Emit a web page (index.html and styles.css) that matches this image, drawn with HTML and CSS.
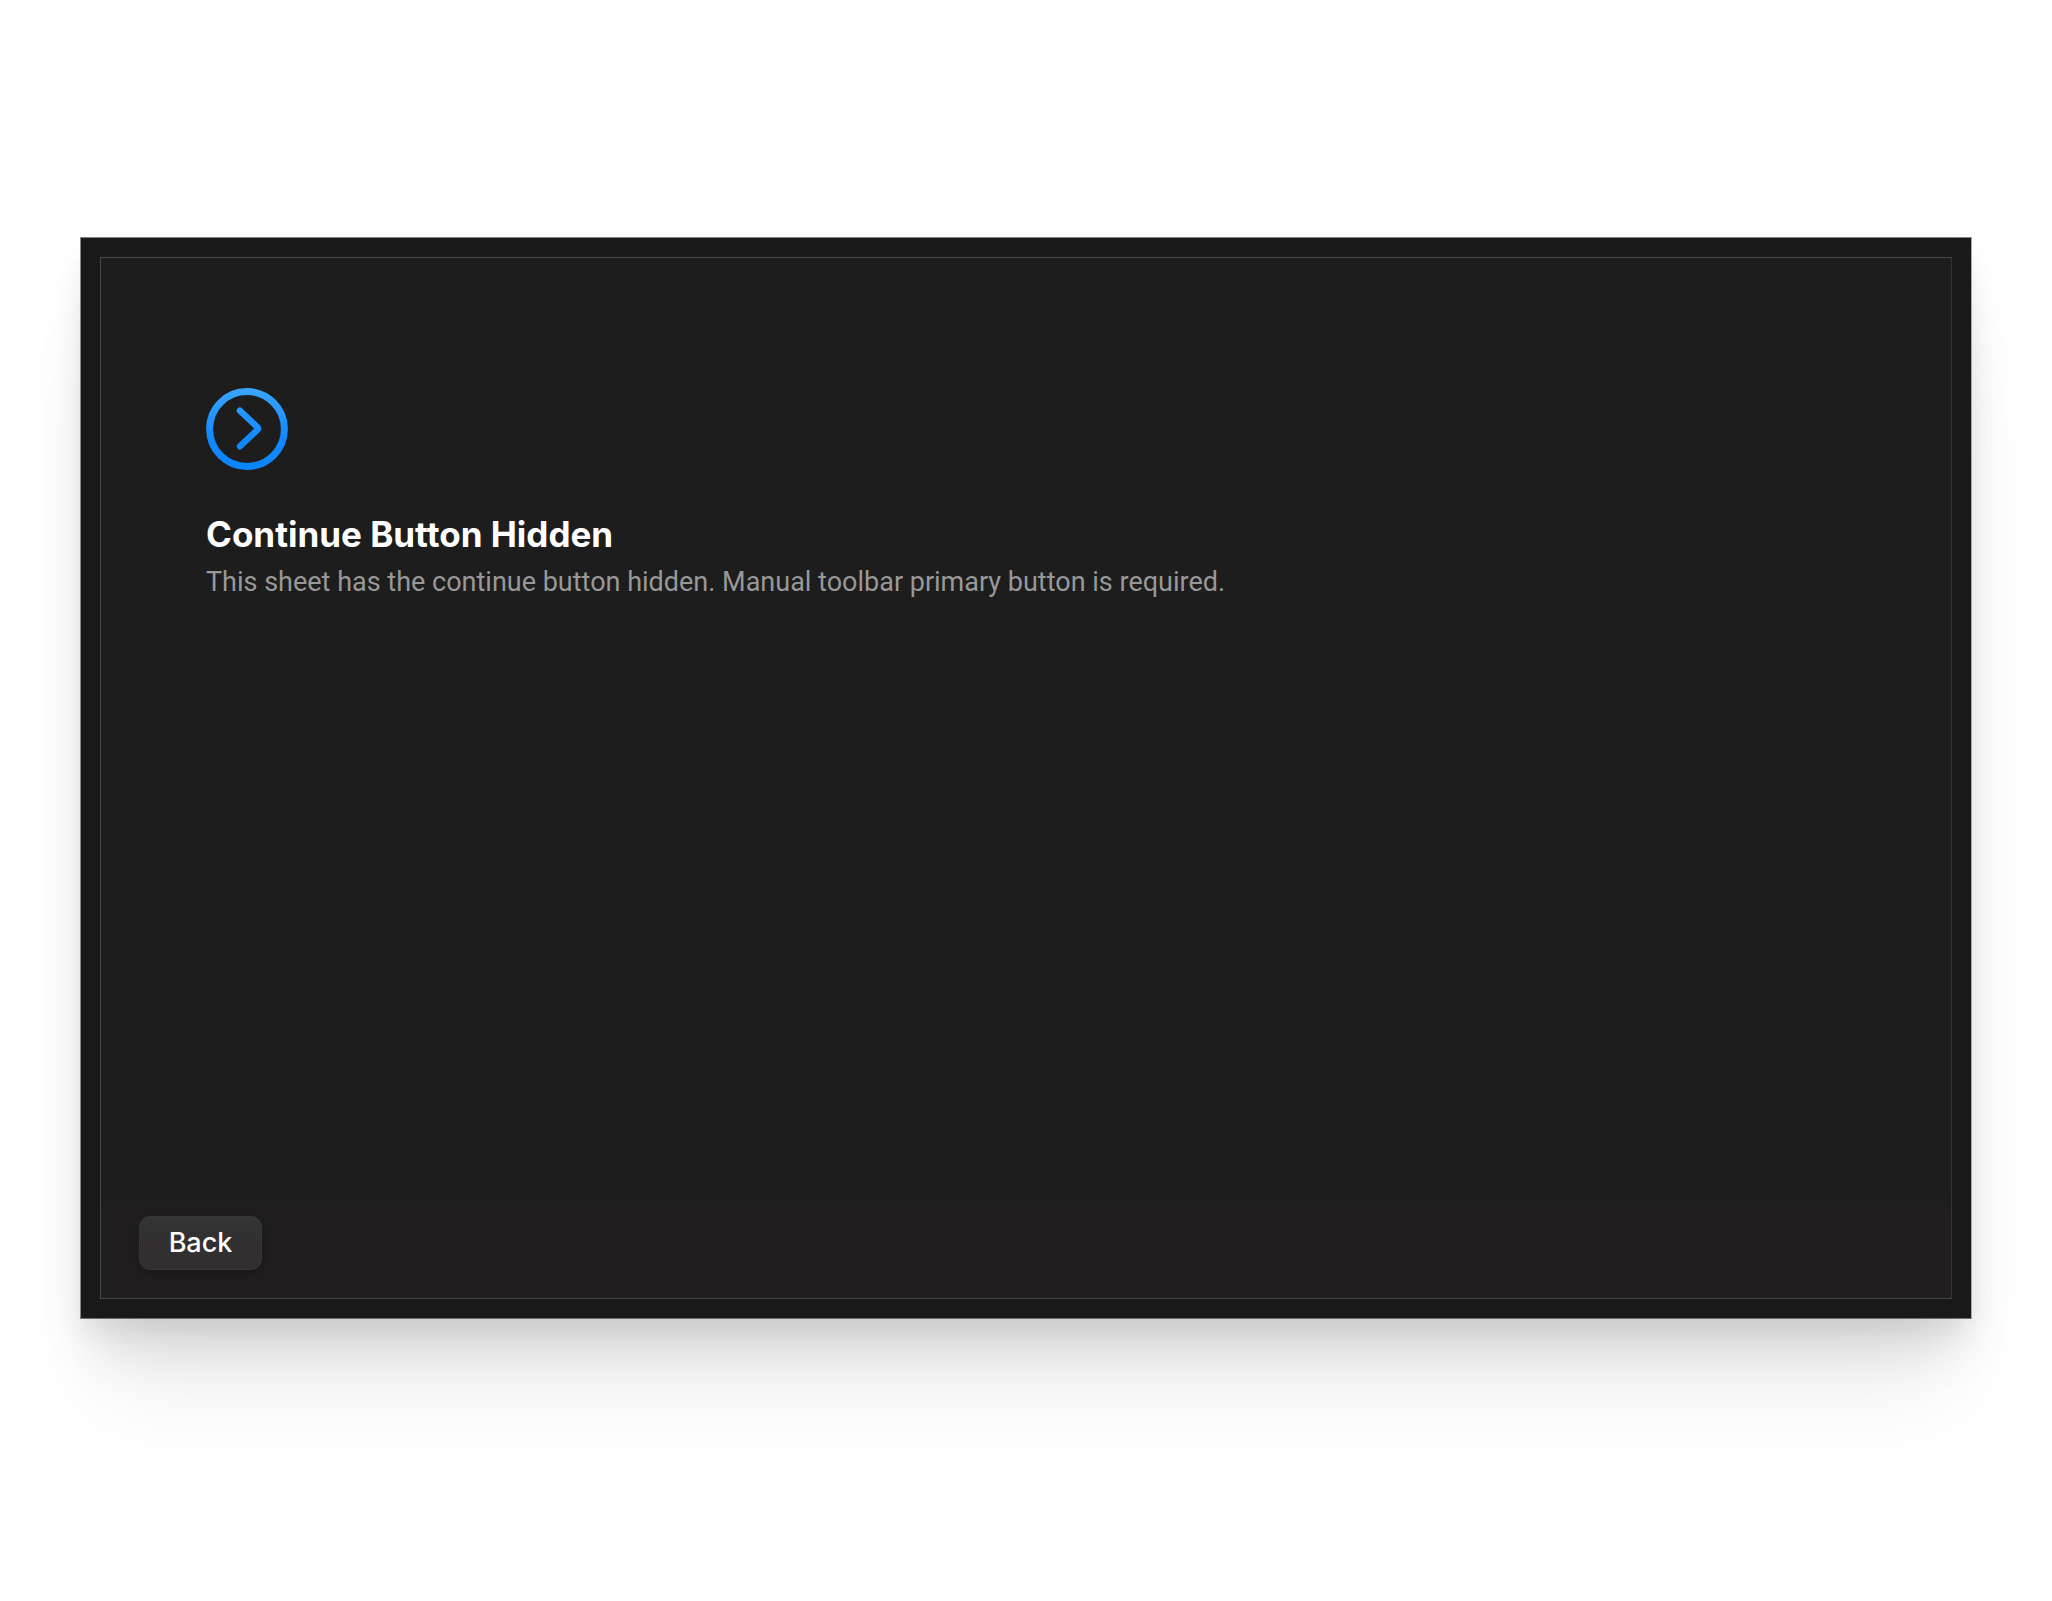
FILE: index.html
```html
<!DOCTYPE html>
<html lang="en">
<head>
<meta charset="utf-8">
<title>Continue Button Hidden</title>
<link rel="stylesheet" href="styles.css">
</head>
<body>
<main class="window">
  <section class="sheet">
    <div class="content">
      <svg class="icon" viewBox="0 0 82 82" fill="none" stroke="url(#accent)" stroke-width="7" aria-hidden="true">
        <defs>
          <linearGradient id="accent" gradientUnits="userSpaceOnUse" x1="0" y1="0" x2="0" y2="82">
            <stop offset="0" stop-color="#3ca5ff"/>
            <stop offset="0.6" stop-color="#1289ff"/>
            <stop offset="1" stop-color="#0a84ff"/>
          </linearGradient>
        </defs>
        <circle cx="41" cy="41" r="37.4"/>
        <path d="M34 22.7 L51.2 39 Q52.7 40.5 51.2 42 L34 58.3" stroke-width="6.4" stroke-linecap="round" stroke-linejoin="round"/>
      </svg>
      <h1 class="title">Continue Button Hidden</h1>
      <p class="subtitle">This sheet has the continue button hidden. Manual toolbar primary button is required.</p>
    </div>
    <footer class="toolbar">
      <button class="button" type="button">Back</button>
    </footer>
  </section>
</main>
</body>
</html>
```
FILE: styles.css
```css
* {
  box-sizing: border-box;
}

body {
  margin: 0;
  min-height: 100vh;
  padding: 237px 80px 282px;
  display: flex;
  background: #fff;
  font-family: Inter, "Liberation Sans", sans-serif;
  color: #fff;
}

.window {
  flex: 1;
  display: flex;
  padding: 19px;
  background: #191919;
  border: 1px solid #6e6e6e;
  border-color: #858585 #a8a8a8 #6e6e6e #858585;
  box-shadow:
    0 90px 90px -24px rgba(0, 0, 0, 0.08),
    0 40px 50px -10px rgba(0, 0, 0, 0.09),
    0 14px 28px -4px rgba(0, 0, 0, 0.08);
}

.sheet {
  flex: 1;
  display: flex;
  flex-direction: column;
  justify-content: space-between;
  border: 1px solid #484848;
  border-right-color: #343434;
  background: linear-gradient(#1d1d1d 88%, #211e1f 94%);
}

.content {
  padding: 130px 105px 0;
}

.icon {
  display: block;
  width: 82px;
  height: 82px;
}

.title {
  margin: 42px 0 0;
  font-size: 35px;
  line-height: 44px;
  font-weight: 700;
}

.subtitle {
  margin: 6px 0 0;
  font-family: Roboto, "Liberation Sans", sans-serif;
  font-size: 27px;
  line-height: 40px;
  color: #989898;
}

.toolbar {
  display: flex;
  padding: 0 38px 28px;
}

.button {
  width: 123px;
  height: 54px;
  padding: 0;
  border: 1px solid #383737;
  border-radius: 11px;
  background: linear-gradient(#353535, #312f30 50%);
  box-shadow: 0 4px 12px rgba(0, 0, 0, 0.25);
  font: 500 27px/36px Inter, "Liberation Sans", sans-serif;
  color: #fff;
}
```
